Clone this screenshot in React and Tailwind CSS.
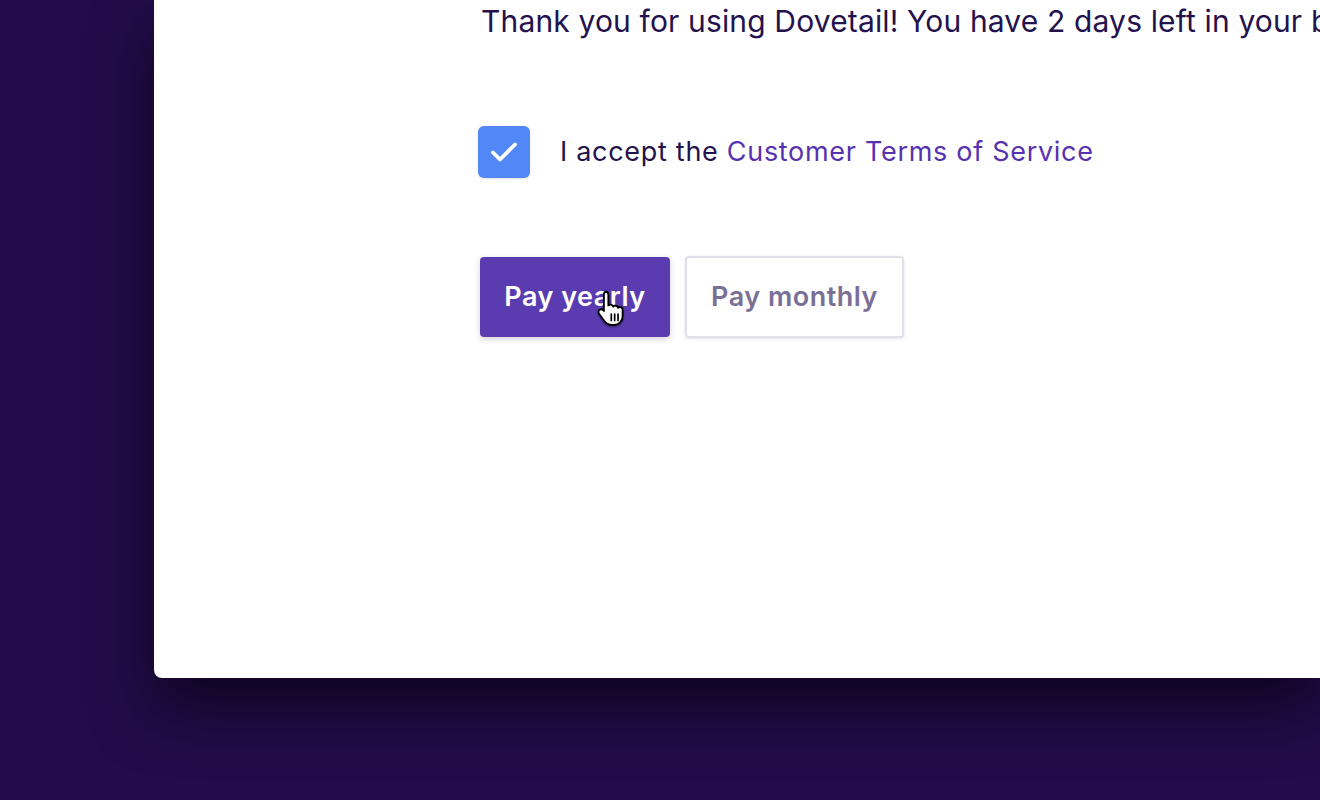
import React from 'react'

const HandCursor = () => (
  <svg width="34" height="39" viewBox="0 0 30 34" className="absolute left-[597px] top-[289px] pointer-events-none drop-shadow-[0_1px_1px_rgba(0,0,0,0.5)]">
    <path
      d="M7.5 2.2c1.4 0 2.5 1.1 2.5 2.5v9.6c.4-.5 1-.8 1.8-.8 1.2 0 2.1.8 2.4 1.8.4-.5 1.1-.9 1.9-.9 1.2 0 2.2.9 2.4 2 .4-.4 1-.7 1.7-.7 1.4 0 2.4 1.1 2.4 2.5v5.6c0 4.2-3.3 7.6-7.5 7.6h-2.6c-2.4 0-4.3-1-5.7-2.9l-5-6.9c-.8-1.1-.6-2.6.5-3.4 1-.7 2.4-.6 3.2.3l.6.7V4.7c0-1.4 1.1-2.5 2.4-2.5z"
      fill="#fff"
      stroke="#000"
      strokeWidth="1.6"
      strokeLinejoin="round"
    />
    <path d="M12.6 22v5.5M15.6 22v5.5M18.6 22v5.5" stroke="#000" strokeWidth="1.5" strokeLinecap="round" />
  </svg>
)

export default function App() {
  return (
    <div className="relative h-[800px] w-full overflow-hidden bg-[#220d4a] font-['Inter',sans-serif]">
      <div className="ml-[154px] h-[678px] overflow-hidden rounded-bl-lg bg-white shadow-[0_30px_60px_rgba(8,2,20,0.75)]">
        <div className="pl-[327px] pt-[1px]">
          <p className="whitespace-nowrap text-[30px] leading-[40px] tracking-[0.15px] text-[#23124d]">
            Thank you for using Dovetail! You have 2 days left in your billing period.
          </p>

          <div className="mt-[85px] flex items-center">
            <div className="-ml-[3px] flex h-[52px] w-[52px] items-center justify-center rounded-md bg-[#5287f7] shadow-sm">
              <svg width="28" height="22" viewBox="0 0 28 22" fill="none">
                <path d="M3 11.5l7 7L25 3.5" stroke="#fff" strokeWidth="3.8" strokeLinecap="round" strokeLinejoin="round" />
              </svg>
            </div>
            <span className="ml-[30px] text-[27px] tracking-[0.7px] text-[#23124d]">
              I accept the <span className="text-[#5632b0]">Customer Terms of Service</span>
            </span>
          </div>

          <div className="mt-[78px] flex items-center gap-[15px]">
            <button className="-ml-[1px] h-[80px] w-[190px] rounded-[4px] bg-[#5b3bb0] text-[27px] font-semibold tracking-[0.5px] text-white shadow-[0_2px_6px_rgba(40,20,80,0.2)]">
              Pay yearly
            </button>
            <button className="h-[82px] w-[219px] rounded-[4px] border-2 border-[#e2dfe8] bg-white text-[27px] font-semibold tracking-[0.5px] text-[#7a7096] shadow-[0_1px_3px_rgba(40,20,80,0.12)]">
              Pay monthly
            </button>
          </div>
        </div>
      </div>
      <HandCursor />
    </div>
  )
}
